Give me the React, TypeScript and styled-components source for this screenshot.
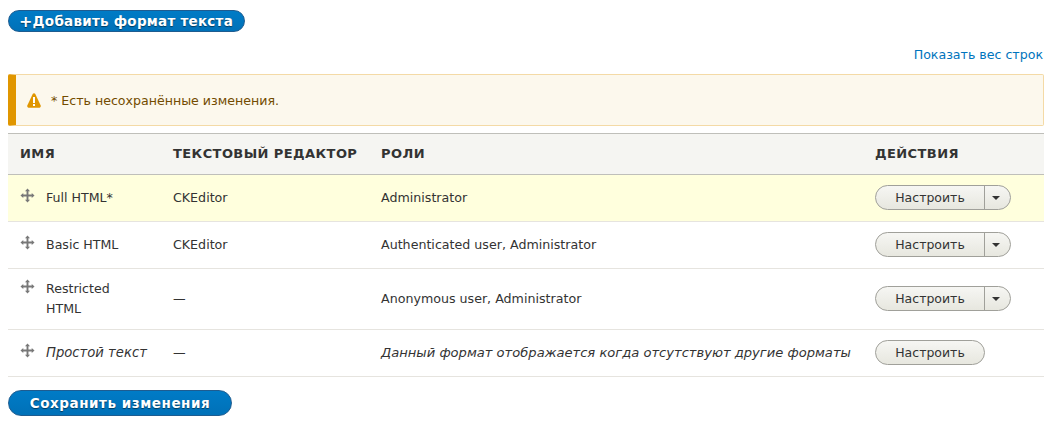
import { createGlobalStyle, styled } from 'styled-components'

const GlobalStyle = createGlobalStyle`
	html, body {
		margin: 0;
		padding: 0;
		background: #fff;
	}
	body {
		font-family: "DejaVu Sans", sans-serif;
		font-size: 12.65px;
		line-height: 20px;
		color: #333;
	}
`

const Page = styled.div`
	display: flex;
	flex-direction: column;
	padding: 10px 13px 0 8px;
`

const PrimaryButton = styled.button<{ $wide?: boolean }>`
	display: inline-flex;
	align-items: center;
	justify-content: center;
	align-self: flex-start;
	box-sizing: border-box;
	height: ${p => (p.$wide ? 26 : 22)}px;
	width: ${p => (p.$wide ? 224 : 237)}px;
	padding: ${p => (p.$wide ? '0' : '0 2px 0 0')};
	border: 1px solid #1e5c90;
	border-radius: 20em;
	background: linear-gradient(to bottom, #007bc6, #0071b8);
	color: #fff;
	font-family: inherit;
	font-size: 13.5px;
	font-weight: 700;
	letter-spacing: ${p => (p.$wide ? '0.55px' : '0.25px')};
	text-shadow: 0 1px 1px rgba(0, 0, 0, 0.5);
`

const Plus = styled.span`
	font-size: 16px;
	margin-left: 1px;
`

const LinkRow = styled.div`
	display: flex;
	justify-content: flex-end;
	margin-top: 13px;
	height: 20px;
	padding-right: 1px;
`

const WeightLink = styled.a`
	color: #0074bd;
	text-decoration: none;
	font-size: 12.6px;
`

const Warning = styled.div`
	display: flex;
	align-items: center;
	gap: 10px;
	box-sizing: border-box;
	height: 52px;
	margin-top: 9px;
	padding: 1px 0 0 11px;
	border: 1px solid #f4daa6;
	border-left: 8px solid #e09600;
	border-radius: 2px;
	background: #fcf8ed;
	color: #734c00;
	font-size: 12.6px;
`

const Table = styled.table`
	width: 100%;
	margin-top: 7px;
	border-collapse: collapse;
	table-layout: fixed;
`

const HeadCell = styled.th<{ $width: number }>`
	width: ${p => p.$width}px;
	box-sizing: border-box;
	height: 41px;
	padding: 0 12px;
	background: #f5f5f2;
	border-top: 1px solid #bfbfba;
	border-bottom: 1px solid #bfbfba;
	color: #333;
	font-size: 13px;
	font-weight: 700;
	letter-spacing: 0.42px;
	text-align: left;
	text-transform: uppercase;
	white-space: nowrap;
`

const Row = styled.tr<{ $height: number; $changed?: boolean }>`
	height: ${p => p.$height}px;
	background: ${p => (p.$changed ? '#ffffdd' : '#fff')};
	border-bottom: 1px solid #e6e4df;
`

const Cell = styled.td<{ $italic?: boolean }>`
	padding: 0 12px;
	font-size: ${p => (p.$italic ? '13.1px' : '12.65px')};
	font-style: ${p => (p.$italic ? 'italic' : 'normal')};
	white-space: nowrap;
`

const ActionsCell = styled.td`
	padding: 0 12px 2px;
`

const NameCell = styled.div<{ $italic?: boolean }>`
	display: flex;
	align-items: flex-start;
	gap: 11px;
	font-size: ${p => (p.$italic ? '13.2px' : '12.6px')};
	font-style: ${p => (p.$italic ? 'italic' : 'normal')};
`

const NameText = styled.span`
	line-height: 20px;
	margin-top: -1px;
	white-space: pre-line;
`

const Handle = styled.svg`
	flex: none;
	width: 15px;
	height: 15px;
	margin-top: -1px;
`

const WarningGlyph = styled.svg`
	flex: none;
	width: 14px;
	height: 15px;
	margin-top: -1px;
`

const SplitButton = styled.div<{ $single?: boolean }>`
	display: flex;
	box-sizing: border-box;
	width: ${p => (p.$single ? 110 : 136)}px;
	height: 25px;
	border: 1px solid #a0a09a;
	border-radius: 20em;
	background: linear-gradient(to bottom, #f6f6f3, #e7e7df);
	overflow: hidden;
`

const ConfigureLabel = styled.span`
	flex: 1;
	display: flex;
	align-items: center;
	justify-content: center;
	padding-top: 2px;
	color: #333;
	font-size: 12.5px;
`

const Toggle = styled.span`
	flex: none;
	position: relative;
	width: 25px;
	border-left: 1px solid #a0a09a;

	&::after {
		content: '';
		position: absolute;
		left: 7px;
		top: 10px;
		border-style: solid;
		border-width: 4px 4px 0;
		border-color: #333 transparent transparent;
	}
`

const SaveWrap = styled.div`
	display: flex;
	margin-top: 13px;
`

const WarningIcon = () => (
	<WarningGlyph viewBox="0 0 14 15">
		<path d="M7 0.3c.6 0 1 .3 1.300.8l5.400 11.400c.4.9-.2 2.200-1.200 2.200H1.500c-1 0-1.600-1.300-1.200-2.200L5.700 1.100C6 .6 6.400.3 7 .3z" fill="#e09600" />
		<rect x="6" y="4" width="2" height="6" fill="#fff" />
		<rect x="6" y="11" width="2" height="2" fill="#fff" />
	</WarningGlyph>
)

const DragHandle = () => (
	<Handle viewBox="0 0 16 16">
		<path
			d="M8 0.5 10.700 3.500H9V7H12.500V5.300L15.500 8 12.500 10.700V9H9V12.500H10.700L8 15.500 5.300 12.500H7V9H3.500V10.700L0.500 8 3.500 5.300V7H7V3.500H5.300z"
			fill="#787878"
		/>
	</Handle>
)

const Configure = ({ single }: { single?: boolean }) => (
	<SplitButton $single={single}>
		<ConfigureLabel>Настроить</ConfigureLabel>
		{!single && <Toggle />}
	</SplitButton>
)

const rows = [
	{ name: 'Full HTML*', editor: 'CKEditor', roles: 'Administrator', height: 47, changed: true },
	{ name: 'Basic HTML', editor: 'CKEditor', roles: 'Authenticated user, Administrator', height: 47 },
	{ name: 'Restricted\nHTML', editor: '—', roles: 'Anonymous user, Administrator', height: 61 },
	{
		name: 'Простой текст',
		editor: '—',
		roles: 'Данный формат отображается когда отсутствуют другие форматы',
		height: 47,
		plain: true,
	},
]

const App = () => {
	return (
		<Page>
			<GlobalStyle />
			<PrimaryButton>
				<Plus>+</Plus>Добавить формат текста
			</PrimaryButton>
			<LinkRow>
				<WeightLink href="#">Показать вес строк</WeightLink>
			</LinkRow>
			<Warning>
				<WarningIcon />
				<span>* Есть несохранённые изменения.</span>
			</Warning>
			<Table>
				<thead>
					<tr>
						<HeadCell $width={153}>Имя</HeadCell>
						<HeadCell $width={208}>Текстовый редактор</HeadCell>
						<HeadCell $width={494}>Роли</HeadCell>
						<HeadCell $width={181}>Действия</HeadCell>
					</tr>
				</thead>
				<tbody>
					{rows.map(row => (
						<Row key={row.name} $height={row.height} $changed={row.changed}>
							<Cell>
								<NameCell $italic={row.plain}>
									<DragHandle />
									<NameText>{row.name}</NameText>
								</NameCell>
							</Cell>
							<Cell>{row.editor}</Cell>
							<Cell $italic={row.plain}>{row.roles}</Cell>
							<ActionsCell>
								<Configure single={row.plain} />
							</ActionsCell>
						</Row>
					))}
				</tbody>
			</Table>
			<SaveWrap>
				<PrimaryButton $wide>Сохранить изменения</PrimaryButton>
			</SaveWrap>
		</Page>
	)
}

export default App
